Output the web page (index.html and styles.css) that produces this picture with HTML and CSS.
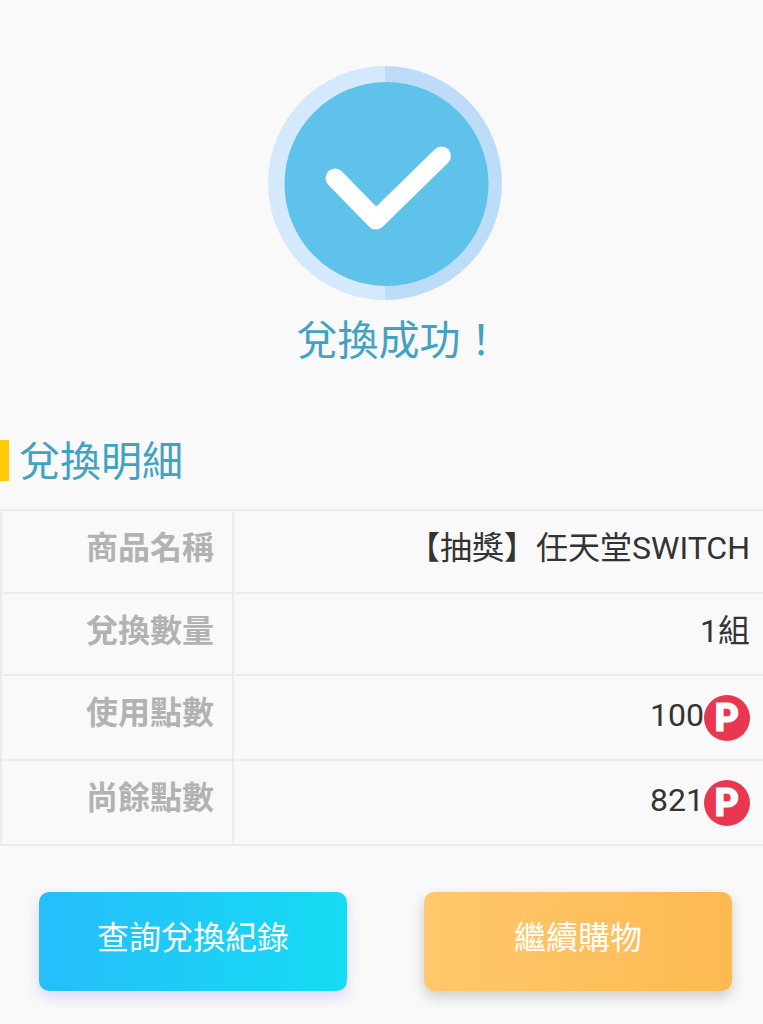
FILE: index.html
```html
<!DOCTYPE html>
<html lang="zh-Hant">
<head>
    <meta charset="UTF-8">
    <meta name="viewport" content="width=device-width, initial-scale=1.0">
    <title>兌換成功</title>
    <link rel="stylesheet" href="styles.css">
</head>
<body>

<div class="result">
    <svg class="result-icon" width="234" height="234" viewBox="0 0 234 234">
        <path d="M117 0a117 117 0 0 0 0 234z" fill="#d5e9fc"/>
        <path d="M117 0a117 117 0 0 1 0 234z" fill="#bcdcfa"/>
        <circle cx="118.500" cy="118" r="102" fill="#5ec2ea"/>
        <path d="M67 112l41 42 65.500-64" fill="none" stroke="#fff" stroke-width="19" stroke-linecap="round" stroke-linejoin="round"/>
    </svg>
    <h1 class="result-title">兌換成功！</h1>
</div>

<h2 class="section-title">兌換明細</h2>

<table class="detail">
    <tr class="row-a">
        <th>商品名稱</th>
        <td>【抽獎】任天堂SWITCH</td>
    </tr>
    <tr class="row-a">
        <th>兌換數量</th>
        <td>1組</td>
    </tr>
    <tr class="row-b">
        <th>使用點數</th>
        <td><div class="points">100<span class="badge">P</span></div></td>
    </tr>
    <tr class="row-b">
        <th>尚餘點數</th>
        <td><div class="points">821<span class="badge">P</span></div></td>
    </tr>
</table>

<div class="actions">
    <button class="btn btn-blue">查詢兌換紀錄</button>
    <button class="btn btn-orange">繼續購物</button>
</div>

</body>
</html>
```

FILE: styles.css
```css
body {
    font-family: Roboto, 'Noto Sans CJK TC', sans-serif;
    background-color: #f9f9f9;
    margin: 0;
}

.result {
    padding-top: 66px;
    display: flex;
    flex-direction: column;
    align-items: center;
}

.result-icon {
    display: block;
    margin-left: 7px;
}

.result-title {
    margin: 15px 0 0 35px;
    font-size: 41px;
    line-height: 52px;
    font-weight: 400;
    color: #41a3c1;
}

.section-title {
    margin: 73px 0 0;
    padding-left: 10px;
    border-left: 9px solid #ffc90a;
    height: 41px;
    font-size: 41px;
    line-height: 45px;
    font-weight: 400;
    color: #41a3c1;
}

.detail {
    width: 100%;
    margin-top: 28px;
    border-collapse: collapse;
    table-layout: fixed;
}

.detail th,
.detail td {
    border: 2px solid #ececec;
    padding: 0 13px 12px 0;
    text-align: right;
    font-size: 32px;
}

.detail th {
    width: 212px;
    padding-right: 18px;
    color: #b2b2b2;
    font-weight: 700;
}

.detail td {
    border-right: none;
    color: #333;
    font-weight: 400;
}

.row-a {
    height: 82.500px;
}

.row-b {
    height: 85px;
}

.row-b th {
    padding-bottom: 16px;
}

.row-b td {
    padding-bottom: 6px;
}

.points {
    display: flex;
    align-items: center;
    justify-content: flex-end;
}

.badge {
    width: 46px;
    height: 46px;
    border-radius: 50%;
    background-color: #e8374f;
    color: #fff;
    font-size: 38px;
    font-weight: 900;
    line-height: 46px;
    text-align: center;
    margin-top: 6px;
    -webkit-text-stroke: 0.8px #fff;
}

.actions {
    display: flex;
    justify-content: space-between;
    margin-top: 46px;
    padding: 0 31px 33px 39px;
}

.btn {
    width: 308px;
    height: 99px;
    padding: 0 0 14px;
    border: none;
    border-radius: 10px;
    color: #fff;
    font-family: inherit;
    font-size: 32px;
    cursor: pointer;
}

.btn-blue {
    background: linear-gradient(to right, #26bdfb, #15dcf3);
    box-shadow: 0 6px 14px rgba(130, 110, 240, 0.25);
}

.btn-orange {
    background: linear-gradient(to right, #fec86c, #feb952);
    box-shadow: 0 6px 14px rgba(0, 0, 0, 0.18);
}
```
